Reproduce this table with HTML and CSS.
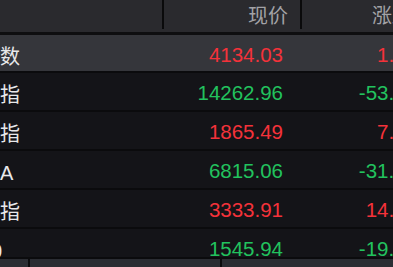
FILE: index.html
```html
<!DOCTYPE html>
<html lang="zh">
<head>
<meta charset="utf-8">
<link rel="stylesheet" href="styles.css">
</head>
<body>
<div class="board">
  <div class="table">
    <div class="head">
      <div class="hcell hname"></div>
      <div class="hcell hprice">现价</div>
      <div class="hcell hchange">涨跌</div>
    </div>
    <div class="row active">
      <div class="name">上证指数</div>
      <div class="price up">4134.03</div>
      <div class="change up">1.25</div>
    </div>
    <div class="row">
      <div class="name">深证成指</div>
      <div class="price down">14262.96</div>
      <div class="change down">-53.17</div>
    </div>
    <div class="row">
      <div class="name">创业板指</div>
      <div class="price up">1865.49</div>
      <div class="change up">7.36</div>
    </div>
    <div class="row">
      <div class="name">深证综A</div>
      <div class="price down">6815.06</div>
      <div class="change down">-31.42</div>
    </div>
    <div class="row">
      <div class="name">中小板指</div>
      <div class="price up">3333.91</div>
      <div class="change up">14.08</div>
    </div>
    <div class="row">
      <div class="name">科创50</div>
      <div class="price down">1545.94</div>
      <div class="change down">-19.63</div>
    </div>
  </div>
  <div class="foot">
    <div class="fcell f1"></div>
    <div class="fcell f2"></div>
    <div class="fcell f3"></div>
  </div>
</div>
</body>
</html>
```
FILE: styles.css
```css
* { box-sizing: border-box; }
html, body {
  margin: 0;
  padding: 0;
  width: 393px;
  height: 267px;
  overflow: hidden;
  background: #141418;
}
.board {
  width: 393px;
  height: 267px;
  overflow: hidden;
  display: flex;
  flex-direction: column;
}
.table {
  margin-left: -60px;
  width: 500px;
  height: 257px;
  flex: none;
  overflow: hidden;
}
.head {
  display: flex;
  height: 35px;
  background: #2a2a2e;
  border-bottom: 3px solid #0e0e10;
  padding-bottom: 3px;
}
.hcell {
  height: 29px;
  font-family: "Noto Sans CJK SC", sans-serif;
  font-size: 20px;
  line-height: 29px;
  color: #a2a2a6;
  text-align: right;
  flex: none;
}
.hname {
  width: 224px;
  border-right: 2px solid #0a0a0b;
}
.hprice {
  width: 138px;
  padding-right: 12px;
  border-right: 2px solid #0a0a0b;
}
.hchange {
  width: 133px;
  padding-right: 23px;
}
.row {
  display: flex;
  height: 39px;
  background: #141418;
  border-bottom: 2px solid #0b0b0d;
  align-items: center;
  padding-top: 3px;
}
.row.active {
  height: 38px;
  background: #35363b;
  padding-top: 4px;
}
.name {
  width: 224px;
  flex: none;
  font-family: "Liberation Sans", "Noto Sans CJK SC", sans-serif;
  font-size: 20px;
  color: #e8e8ea;
  white-space: nowrap;
  overflow: hidden;
}
.price, .change {
  flex: none;
  font-family: "Liberation Sans", Arial, sans-serif;
  font-size: 20.5px;
  text-align: right;
}
.price {
  width: 136px;
  padding-right: 17px;
}
.change {
  width: 134px;
  padding-right: 17px;
}
.up { color: #f4323a; }
.down { color: #22c25e; }
.foot {
  flex: 1;
  display: flex;
  border-top: 2px solid #0b0b0d;
  background: #2b2d33;
}
.fcell { height: 100%; }
.f1 { width: 30px; border-right: 2px solid #0b0b0d; }
.f2 { width: 192px; border-right: 2px solid #0b0b0d; }
.f3 { flex: 1; }
```
